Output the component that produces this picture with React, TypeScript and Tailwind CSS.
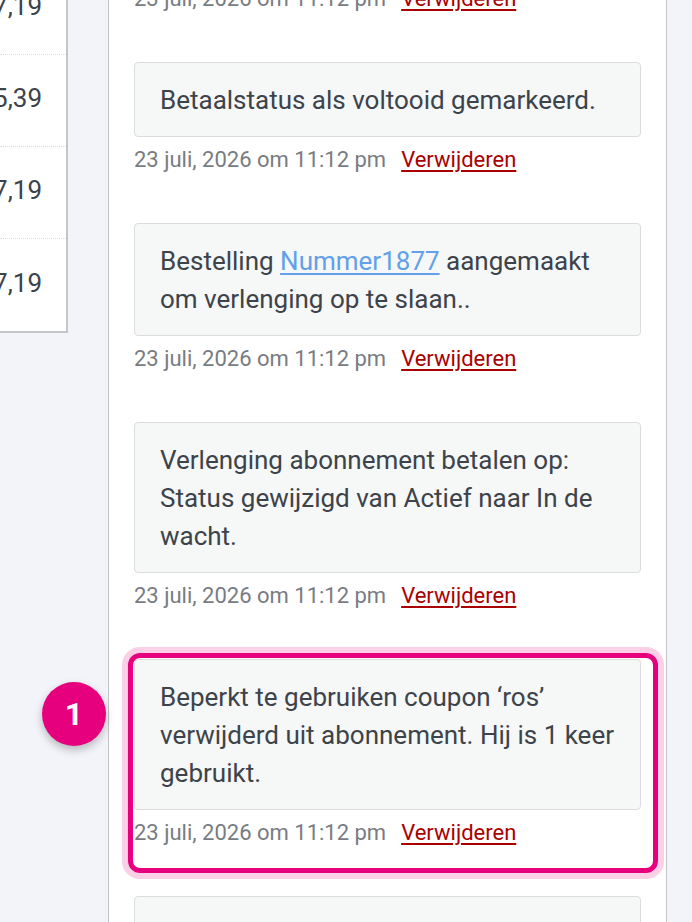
import React from 'react';

type Note = {
  id: number;
  content: React.ReactNode;
  highlighted?: boolean;
};

const notes: Note[] = [
  { id: 1, content: 'Betaalstatus als voltooid gemarkeerd.' },
  {
    id: 2,
    content: (
      <>
        Bestelling{' '}
        <a href="#" className="text-[#62a0ea] underline underline-offset-[3px]">
          Nummer1877
        </a>{' '}
        aangemaakt om verlenging op te slaan..
      </>
    ),
  },
  {
    id: 3,
    content: 'Verlenging abonnement betalen op: Status gewijzigd van Actief naar In de wacht.',
  },
  {
    id: 4,
    content: 'Beperkt te gebruiken coupon ‘ros’ verwijderd uit abonnement. Hij is 1 keer gebruikt.',
    highlighted: true,
  },
  { id: 5, content: 'Abonnement status gewijzigd van Actief naar In de wacht.' },
];

const amounts = ['€17,19', '€15,39', '€17,19', '€17,19'];

const NoteMeta: React.FC = () => (
  <div className="flex items-center gap-[15px] text-[22px] leading-[26px] whitespace-nowrap">
    <span className="text-[#787c82]">23 juli, 2026 om 11:12 pm</span>
    <a href="#" className="text-[#a00] underline underline-offset-[3px]">
      Verwijderen
    </a>
  </div>
);

const NoteItem: React.FC<{ note: Note }> = ({ note }) => (
  <li className="relative mb-[50px]">
    <div className="mb-[10px] rounded-[4px] border border-[#dcdcde] bg-[#f6f7f7] px-[25px] py-[17.5px] text-[26px] leading-[38px] text-[#3c434a]">
      {note.content}
    </div>
    <NoteMeta />
    {note.highlighted && (
      <>
        <div className="pointer-events-none absolute -left-[6px] -top-[6px] -right-[17px] -bottom-[27px] rounded-[12px] border-[5px] border-[#e6007e] shadow-[0_0_0_6px_#fbd0e6]" />
        <div className="absolute -left-[92px] top-[23px] flex h-[64px] w-[64px] items-center justify-center rounded-full bg-[#e6007e] text-[32px] font-bold text-white shadow-[0_4px_8px_rgba(0,0,0,0.25)]">
          1
        </div>
      </>
    )}
  </li>
);

export default function App() {
  return (
    <div
      className="flex h-[922px] w-[692px] items-start overflow-hidden bg-[#f3f4f9]"
      style={{ fontFamily: 'Roboto, "Noto Sans", sans-serif' }}
    >
      {/* order totals column, cut off on the left */}
      <div className="-mt-[37px] w-[68px] shrink-0 border-r-2 border-b-2 border-[#c5c6c9] bg-white">
        {amounts.map((amount, i) => (
          <div
            key={i}
            className={`flex h-[92px] items-center justify-end overflow-hidden pr-[24px] pb-[4px] text-[26px] text-[#3c434a] whitespace-nowrap ${
              i < amounts.length - 1 ? 'border-b border-dotted border-[#dcdcde]' : ''
            }`}
          >
            {amount}
          </div>
        ))}
      </div>

      {/* notes panel */}
      <div className="ml-[40px] h-[922px] w-[559px] shrink-0 border-x border-[#c3c4c7] bg-white px-[25px]">
        <div className="-mt-[14px] mb-[50px]">
          <NoteMeta />
        </div>
        <ul>
          {notes.map(note => (
            <NoteItem key={note.id} note={note} />
          ))}
        </ul>
      </div>
    </div>
  );
}
